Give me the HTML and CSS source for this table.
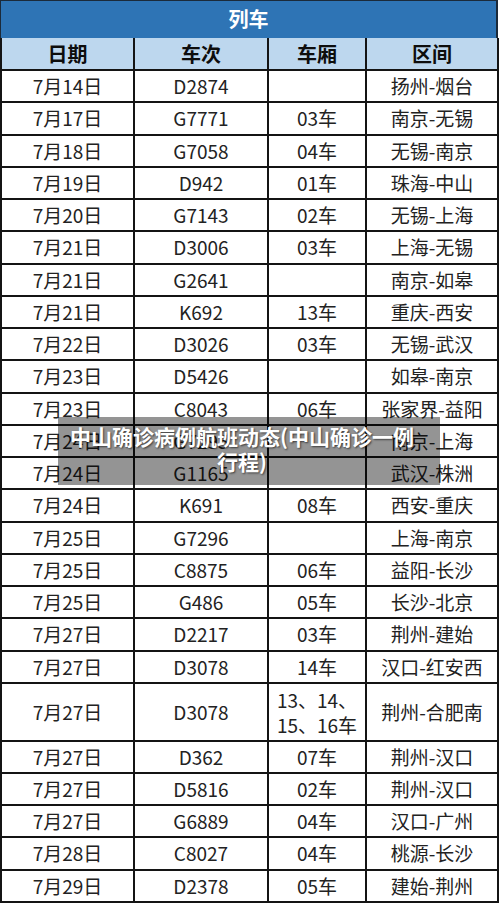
FILE: index.html
```html
<!DOCTYPE html>
<html lang="zh">
<head>
<meta charset="utf-8">
<link rel="stylesheet" href="styles.css">
</head>
<body>
<div class="page">
  <div class="title">列车</div>
  <table class="grid">
    <colgroup>
      <col class="c1"><col class="c2"><col class="c3"><col class="c4">
    </colgroup>
    <thead>
      <tr><th>日期</th><th>车次</th><th>车厢</th><th>区间</th></tr>
    </thead>
    <tbody>
      <tr><td>7月14日</td><td>D2874</td><td></td><td>扬州-烟台</td></tr>
      <tr><td>7月17日</td><td>G7771</td><td>03车</td><td>南京-无锡</td></tr>
      <tr><td>7月18日</td><td>G7058</td><td>04车</td><td>无锡-南京</td></tr>
      <tr><td>7月19日</td><td>D942</td><td>01车</td><td>珠海-中山</td></tr>
      <tr><td>7月20日</td><td>G7143</td><td>02车</td><td>无锡-上海</td></tr>
      <tr><td>7月21日</td><td>D3006</td><td>03车</td><td>上海-无锡</td></tr>
      <tr><td>7月21日</td><td>G2641</td><td></td><td>南京-如皋</td></tr>
      <tr><td>7月21日</td><td>K692</td><td>13车</td><td>重庆-西安</td></tr>
      <tr><td>7月22日</td><td>D3026</td><td>03车</td><td>无锡-武汉</td></tr>
      <tr><td>7月23日</td><td>D5426</td><td></td><td>如皋-南京</td></tr>
      <tr><td>7月23日</td><td>C8043</td><td>06车</td><td>张家界-益阳</td></tr>
      <tr><td>7月24日</td><td>G7295</td><td></td><td>南京-上海</td></tr>
      <tr><td>7月24日</td><td>G1165</td><td></td><td>武汉-株洲</td></tr>
      <tr><td>7月24日</td><td>K691</td><td>08车</td><td>西安-重庆</td></tr>
      <tr><td>7月25日</td><td>G7296</td><td></td><td>上海-南京</td></tr>
      <tr><td>7月25日</td><td>C8875</td><td>06车</td><td>益阳-长沙</td></tr>
      <tr><td>7月25日</td><td>G486</td><td>05车</td><td>长沙-北京</td></tr>
      <tr><td>7月27日</td><td>D2217</td><td>03车</td><td>荆州-建始</td></tr>
      <tr><td>7月27日</td><td>D3078</td><td>14车</td><td>汉口-红安西</td></tr>
      <tr class="tall"><td>7月27日</td><td>D3078</td><td class="multi">13、14、<br>15、16车</td><td>荆州-合肥南</td></tr>
      <tr class="r2"><td>7月27日</td><td>D362</td><td>07车</td><td>荆州-汉口</td></tr>
      <tr class="r2"><td>7月27日</td><td>D5816</td><td>02车</td><td>荆州-汉口</td></tr>
      <tr class="r2"><td>7月27日</td><td>G6889</td><td>04车</td><td>汉口-广州</td></tr>
      <tr class="r2"><td>7月28日</td><td>C8027</td><td>04车</td><td>桃源-长沙</td></tr>
      <tr class="r2"><td>7月29日</td><td>D2378</td><td>05车</td><td>建始-荆州</td></tr>
    </tbody>
  </table>
  <div class="caption">中山确诊病例航班动态(中山确诊一例<br>行程)</div>
</div>
</body>
</html>
```

FILE: styles.css
```css
html, body {
  margin: 0;
  padding: 0;
  background: #ffffff;
}

.page {
  position: relative;
  width: 498px;
  font-family: "Noto Sans CJK SC", "Noto Sans", sans-serif;
  color: #222222;
}

.title {
  height: 37px;
  background: #2e74b5;
  border-top: 1px solid #1b2a3a;
  border-left: 1px solid #1b2a3a;
  border-right: 2px solid #1b2a3a;
  color: #ffffff;
  font-weight: 700;
  font-size: 20px;
  line-height: 36px;
  text-align: center;
}

.grid {
  width: 497px;
  table-layout: fixed;
  border-collapse: collapse;
  font-size: 19px;
}

.c1 { width: 133px; }
.c2 { width: 134px; }
.c3 { width: 98px; }
.c4 { width: 132px; }

.grid th,
.grid td {
  border: 2px solid #141414;
  padding: 0;
  text-align: center;
  vertical-align: middle;
  line-height: 24px;
}

.grid th {
  background: #bdd7ee;
  font-weight: 700;
  font-size: 20px;
  color: #0d0d0d;
  border-top: hidden;
  height: 31px;
}

.grid tbody tr {
  height: 32.26px;
}

.grid tbody tr.tall {
  height: 58px;
}

.grid tbody tr.r2 {
  height: 32.2px;
}

.grid td.multi {
  line-height: 25px;
}

.caption {
  position: absolute;
  left: 58px;
  top: 417px;
  width: 382px;
  height: 68px;
  box-sizing: border-box;
  padding: 7px 14px 0 0;
  background: rgba(0, 0, 0, 0.42);
  color: #ffffff;
  font-weight: 700;
  font-size: 21px;
  line-height: 25px;
  text-align: center;
  text-shadow: 1px 1px 2px rgba(0, 0, 0, 0.6);
}
```
